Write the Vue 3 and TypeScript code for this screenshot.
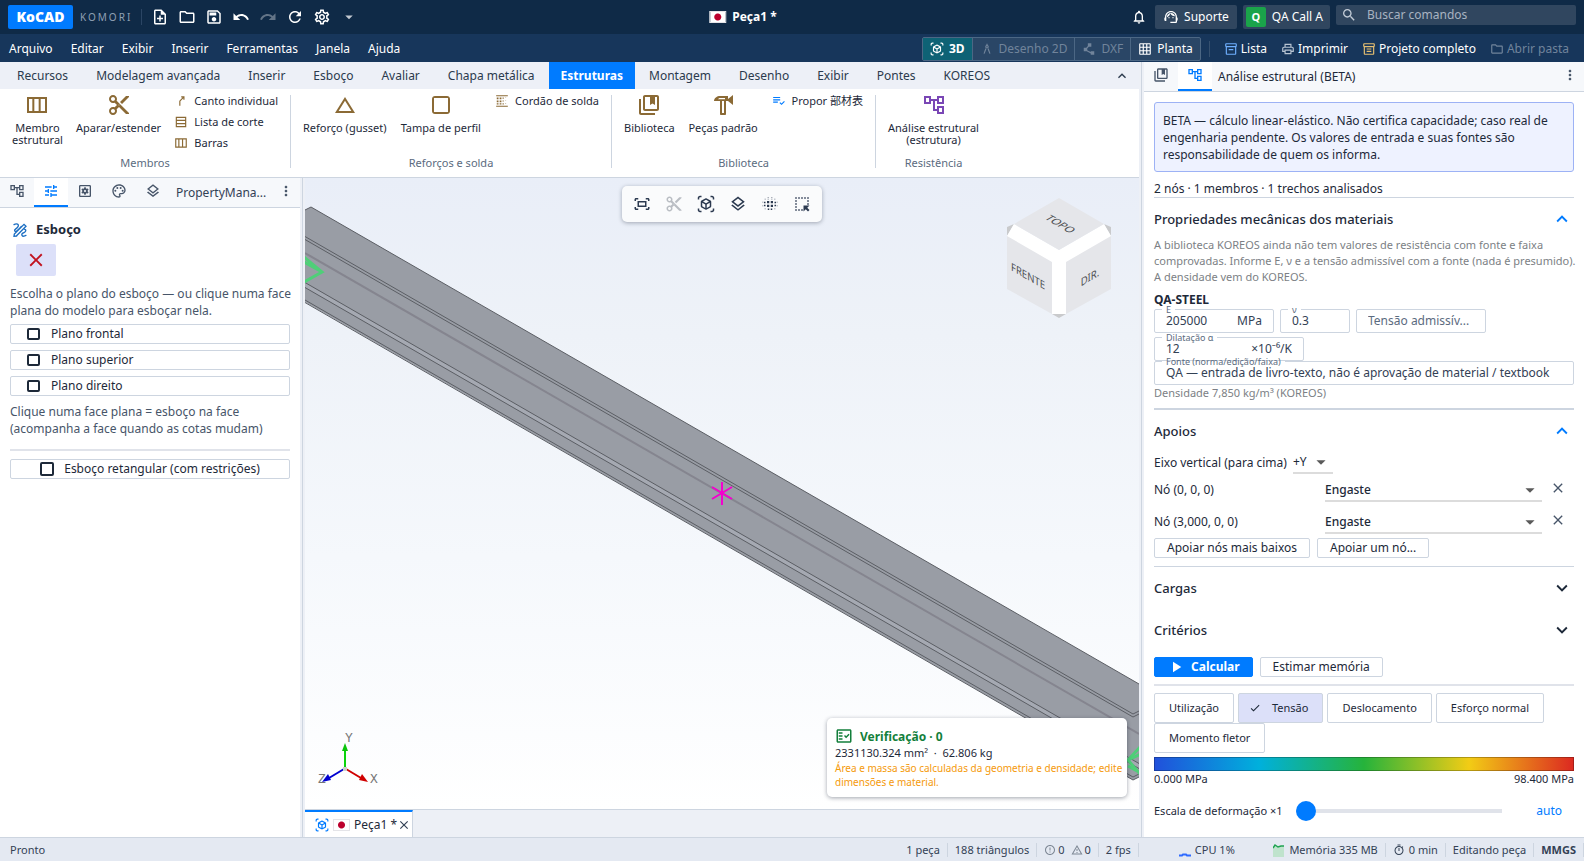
<script setup lang="ts">
import { ref, h } from 'vue'
import type { FunctionalComponent } from 'vue'

const glyphs: Record<string, string> = {
  newFile: 'M14 2H6c-1.1 0-2 .9-2 2v16c0 1.1.89 2 1.99 2H18c1.1 0 2-.9 2-2V8l-6-6zm4 18H6V4h7v5h5v11zM11 18h2v-3h3v-2h-3v-3h-2v3H8v2h3z',
  folder: 'M9.17 6l2 2H20v10H4V6h5.17M10 4H4c-1.1 0-1.99.9-1.99 2L2 18c0 1.1.9 2 2 2h16c1.1 0 2-.9 2-2V8c0-1.1-.9-2-2-2h-8l-2-2z',
  save: 'M17 3H5c-1.11 0-2 .9-2 2v14c0 1.1.89 2 2 2h14c1.1 0 2-.9 2-2V7l-4-4zm2 16H5V5h11.17L19 7.83V19zm-7-7c-1.66 0-3 1.34-3 3s1.34 3 3 3 3-1.34 3-3-1.34-3-3-3zM6 6h9v4H6z',
  undo: 'M12.5 8c-2.65 0-5.05.99-6.9 2.6L2 7v9h9l-3.62-3.62c1.39-1.16 3.16-1.88 5.12-1.88 3.54 0 6.55 2.31 7.6 5.5l2.37-.78C21.08 11.03 17.15 8 12.5 8z',
  redo: 'M18.4 10.6C16.55 8.99 14.15 8 11.5 8c-4.65 0-8.58 3.03-9.96 7.22L3.9 16c1.05-3.19 4.05-5.5 7.6-5.5 1.95 0 3.73.72 5.12 1.88L13 16h9V7l-3.6 3.6z',
  refresh: 'M17.65 6.35C16.2 4.9 14.21 4 12 4c-4.42 0-7.99 3.58-7.99 8s3.57 8 7.99 8c3.73 0 6.84-2.55 7.73-6h-2.08c-.82 2.33-3.04 4-5.65 4-3.31 0-6-2.69-6-6s2.69-6 6-6c1.66 0 3.14.69 4.22 1.78L13 11h7V4l-2.35 2.35z',
  gear: 'M19.43 12.98c.04-.32.07-.64.07-.98 0-.34-.03-.66-.07-.98l2.11-1.65c.19-.15.24-.42.12-.64l-2-3.46c-.09-.16-.26-.25-.44-.25-.06 0-.12.01-.17.03l-2.49 1c-.52-.4-1.08-.73-1.69-.98l-.38-2.65C14.46 2.18 14.25 2 14 2h-4c-.25 0-.46.18-.49.42l-.38 2.65c-.61.25-1.17.59-1.69.98l-2.49-1c-.06-.02-.12-.03-.18-.03-.17 0-.34.09-.43.25l-2 3.46c-.13.22-.07.49.12.64l2.11 1.65c-.04.32-.07.65-.07.98 0 .33.03.66.07.98l-2.11 1.65c-.19.15-.24.42-.12.64l2 3.46c.09.16.26.25.44.25.06 0 .12-.01.17-.03l2.49-1c.52.4 1.08.73 1.69.98l.38 2.65c.03.24.24.42.49.42h4c.25 0 .46-.18.49-.42l.38-2.65c.61-.25 1.17-.59 1.69-.98l2.49 1c.06.02.12.03.18.03.17 0 .34-.09.43-.25l2-3.46c.12-.22.07-.49-.12-.64l-2.11-1.65zm-1.98-1.71c.04.31.05.52.05.73 0 .21-.02.43-.05.73l-.14 1.13.89.7 1.08.84-.7 1.21-1.27-.51-1.04-.42-.9.68c-.43.32-.84.56-1.25.73l-1.06.43-.16 1.13-.2 1.35h-1.4l-.19-1.35-.16-1.13-1.06-.43c-.43-.18-.83-.41-1.23-.71l-.91-.7-1.06.43-1.27.51-.7-1.21 1.08-.84.89-.7-.14-1.13c-.03-.31-.05-.54-.05-.74s.02-.43.05-.73l.14-1.13-.89-.7-1.08-.84.7-1.21 1.27.51 1.04.42.9-.68c.43-.32.84-.56 1.25-.73l1.06-.43.16-1.13.2-1.35h1.39l.19 1.35.16 1.13 1.06.43c.43.18.83.41 1.23.71l.91.7 1.06-.43 1.27-.51.7 1.21-1.07.85-.89.7.14 1.13zM12 8c-2.21 0-4 1.79-4 4s1.79 4 4 4 4-1.79 4-4-1.79-4-4-4zm0 6c-1.1 0-2-.9-2-2s.9-2 2-2 2 .9 2 2-.9 2-2 2z',
  caret: 'M7 10l5 5 5-5z',
  bell: 'M12 22c1.1 0 2-.9 2-2h-4c0 1.1.89 2 2 2zm6-6v-5c0-3.07-1.64-5.64-4.5-6.32V4c0-.83-.67-1.5-1.5-1.5s-1.5.67-1.5 1.5v.68C7.63 5.36 6 7.92 6 11v5l-2 2v1h16v-1l-2-2zm-2 1H8v-6c0-2.48 1.51-4.5 4-4.5s4 2.02 4 4.5v6z',
  agent: 'M21 12.22C21 6.73 16.74 3 12 3c-4.69 0-9 3.65-9 9.28-.6.34-1 .98-1 1.72v2c0 1.1.9 2 2 2h1v-6.1c0-3.87 3.13-7 7-7s7 3.13 7 7V19h-8v2h8c1.1 0 2-.9 2-2v-1.22c.59-.31 1-.92 1-1.64v-2.3c0-.7-.41-1.31-1-1.62zM8 13a1 1 0 1 0 2 0a1 1 0 1 0-2 0zM14 13a1 1 0 1 0 2 0a1 1 0 1 0-2 0zM18 11.03C17.52 8.18 15.04 6 12.05 6c-3.03 0-6.29 2.51-6.03 6.45 2.47-1.01 4.33-3.21 4.86-5.89 1.31 2.63 4 4.44 7.12 4.47z',
  search: 'M15.5 14h-.79l-.28-.27C15.41 12.59 16 11.11 16 9.5 16 5.91 13.09 3 9.5 3S3 5.91 3 9.5 5.91 16 9.5 16c1.61 0 3.09-.59 4.23-1.57l.27.28v.79l5 4.99L20.49 19l-4.99-5zm-6 0C7.01 14 5 11.99 5 9.5S7.01 5 9.5 5 14 7.01 14 9.5 11.99 14 9.5 14z',
  cube: 'M3 4c0-.55.45-1 1-1h2V1H4C2.34 1 1 2.34 1 4v2h2V4zM3 20v-2H1v2c0 1.66 1.34 3 3 3h2v-2H4c-.55 0-1-.45-1-1zM20 1h-2v2h2c.55 0 1 .45 1 1v2h2V4c0-1.66-1.34-3-3-3zM21 20c0 .55-.45 1-1 1h-2v2h2c1.66 0 3-1.34 3-3v-2h-2v2zM19 14.87V9.13c0-.72-.38-1.38-1-1.73l-5-2.88c-.31-.18-.65-.27-1-.27s-.69.09-1 .27L6 7.39c-.62.36-1 1.02-1 1.74v5.74c0 .72.38 1.38 1 1.73l5 2.88c.31.18.65.27 1 .27s.69-.09 1-.27l5-2.88c.62-.35 1-1.01 1-1.73zm-8 2.3l-4-2.3v-4.63l4 2.33v4.6zm1-6.33L8.04 8.53 12 6.25l3.96 2.28L12 10.84zm5 4.03l-4 2.3v-4.6l4-2.33v4.63z',
  compass: 'M6.36 18.78L6.61 21l1.62-1.54 2.77-7.6c-.68-.17-1.28-.51-1.77-.98L6.36 18.78zM14.77 10.88c-.49.47-1.1.81-1.77.98l2.77 7.6L17.39 21l.26-2.22-2.88-7.9zM15 8c0-1.3-.84-2.4-2-2.82V3h-2v2.18C9.84 5.6 9 6.7 9 8c0 1.66 1.34 3 3 3s3-1.34 3-3zm-3 1c-.55 0-1-.45-1-1s.45-1 1-1 1 .45 1 1-.45 1-1 1z',
  polyline: 'M15 16v1.26l-6-3v-3.17L11.7 8H16V2h-6v4.9L7.3 10H3v6h5l7 3.5V22h6v-6z',
  grid: 'M20 2H4c-1.1 0-2 .9-2 2v16c0 1.1.9 2 2 2h16c1.1 0 2-.9 2-2V4c0-1.1-.9-2-2-2zM8 20H4v-4h4v4zm0-6H4v-4h4v4zm0-6H4V4h4v4zm6 12h-4v-4h4v4zm0-6h-4v-4h4v4zm0-6h-4V4h4v4zm6 12h-4v-4h4v4zm0-6h-4v-4h4v4zm0-6h-4V4h4v4z',
  box: 'M20 2H4c-1 0-2 .9-2 2v3.01c0 .72.43 1.34 1 1.69V20c0 1.1 1.1 2 2 2h14c.9 0 2-.9 2-2V8.7c.57-.35 1-.97 1-1.69V4c0-1.1-1-2-2-2zm-1 18H5V9h14v11zm1-13H4V4h16v3zM8 12h8v2H8z',
  boxFull: 'M20 2H4c-1 0-2 .9-2 2v3.01c0 .72.43 1.34 1 1.69V20c0 1.1 1.1 2 2 2h14c.9 0 2-.9 2-2V8.7c.57-.35 1-.97 1-1.69V4c0-1.1-1-2-2-2zm-1 18H5V9h14v11zm1-13H4V4h16v3zM8 11h8v2H8zM8 15h8v2H8z',
  print: 'M19 8h-1V3H6v5H5c-1.66 0-3 1.34-3 3v6h4v4h12v-4h4v-6c0-1.66-1.34-3-3-3zM8 5h8v3H8V5zm8 14H8v-4h8v4zm2-4v-2H6v2H4v-4c0-.55.45-1 1-1h14c.55 0 1 .45 1 1v4h-2z',
  tree: 'M22 11V3h-7v3H9V3H2v8h7V8h2v10h4v3h7v-8h-7v3h-2V8h2v3h7zM7 9H4V5h3v4zm10 6h3v4h-3v-4zm0-10h3v4h-3V5z',
  bookmarks: 'M4 6H2v14c0 1.1.9 2 2 2h14v-2H4V6zm16-4H8c-1.1 0-2 .9-2 2v12c0 1.1.9 2 2 2h12c1.1 0 2-.9 2-2V4c0-1.1-.9-2-2-2zm0 14H8V4h5v8l2.5-1.5L18 12V4h2v12z',
  cut: 'M9.64 7.64c.23-.5.36-1.05.36-1.64 0-2.21-1.79-4-4-4S2 3.79 2 6s1.79 4 4 4c.59 0 1.14-.13 1.64-.36L10 12l-2.36 2.36C7.14 14.13 6.59 14 6 14c-2.21 0-4 1.79-4 4s1.79 4 4 4 4-1.79 4-4c0-.59-.13-1.14-.36-1.64L12 14l7 7h3v-1L9.64 7.64zM6 8c-1.1 0-2-.89-2-2s.9-2 2-2 2 .89 2 2-.9 2-2 2zm0 12c-1.1 0-2-.89-2-2s.9-2 2-2 2 .89 2 2-.9 2-2 2zm6-7.5c-.28 0-.5-.22-.5-.5s.22-.5.5-.5.5.22.5.5-.22.5-.5.5zM19 3l-6 6 2 2 7-7V3z',
  columns: 'M2 4v16h20V4H2zm5.33 14H4V6h3.33v12zm6.34 0h-4.34V6h4.34v12zM20 18h-4.33V6H20v12z',
  rows: 'M3 3v18h18V3H3zm16 2v3.33H5V5h14zm0 8.67H5v-3.34h14v3.34zM5 19v-3.33h14V19H5z',
  corner: 'M12.34 6V4H18v5.66h-2V7.41l-5 5V20H9v-7.58c0-.53.21-1.04.59-1.41l5-5h-2.25z',
  triangle: 'M12 7.77L18.39 18H5.61L12 7.77M12 4L2 20h20L12 4z',
  square: 'M18 3H6C4.300 3 3 4.300 3 6v12c0 1.700 1.300 3 3 3h12c1.700 0 3-1.300 3-3V6c0-1.700-1.300-3-3-3zm1 16H5V5h14v14z',
  weld: 'M2 2h20v2H2zM2 20h20v2H2zM3 6h3v3H3zM8 6h3v3H8zM13 6h2v2h-2zM18 6h1v1h-1zM3 11h3v3H3zM8 11h3v3H8zM13 11h2v2h-2zM18 11h1v1h-1zM3 16h3v2H3zM8 16h3v2H8zM13 16h2v2h-2zM18 16h1v1h-1z',
  hammer: 'M22 2l-5 4V3H9C6.240 3 3 5 3 8h6v13c0 .55.45 1 1 1h4c.55 0 1-.45 1-1V8h2l5 4zM11 8h2v12h-2zM7 6.300C7.600 5.500 8.300 5 9.300 5H14v1.300z',
  checklist: 'M2 5h12v2H2zM2 9h12v2H2zM2 13h8v2H2zM20.590 11.930l-4.250 4.240-2.120-2.120-1.410 1.410L16.340 19 22 13.340z',
  tune: 'M3 17v2h6v-2H3zM3 5v2h10V5H3zm10 16v-2h8v-2h-8v-2h-2v6h2zM7 9v2H3v2h4v2h2V9H7zm14 4v-2H11v2h10zm-6-4h2V7h4V5h-4V3h-2v6z',
  gearBox: 'M19 3H5c-1.110 0-2 .9-2 2v14c0 1.100.89 2 2 2h14c1.100 0 2-.9 2-2V5c0-1.100-.9-2-2-2zm0 16H5V5h14v14zM10.900 6.500h2.200l.4 1.700 1.100.6 1.700-.5 1.100 1.900-1.300 1.200v1.200l1.300 1.200-1.100 1.900-1.700-.5-1.100.6-.4 1.700h-2.200l-.4-1.700-1.100-.6-1.700.5-1.100-1.900 1.300-1.200v-1.200L6.600 10.200l1.100-1.900 1.700.5 1.100-.6zM12 10.400a1.600 1.600 0 1 0 0 3.200a1.600 1.600 0 1 0 0-3.200z',
  palette: 'M12 22C6.490 22 2 17.510 2 12S6.490 2 12 2s10 4.040 10 9c0 3.310-2.690 6-6 6h-1.770c-.28 0-.5.22-.5.5 0 .12.05.23.13.33.41.47.64 1.060.64 1.670 0 1.380-1.120 2.500-2.500 2.500zm0-18c-4.410 0-8 3.590-8 8s3.590 8 8 8c.28 0 .5-.22.5-.5 0-.16-.08-.28-.14-.35-.41-.46-.63-1.050-.63-1.650 0-1.380 1.120-2.500 2.500-2.500H16c2.210 0 4-1.790 4-4 0-3.860-3.590-7-8-7zM5 11.500a1.500 1.500 0 1 0 3 0a1.500 1.500 0 1 0-3 0zM8 7.500a1.500 1.500 0 1 0 3 0a1.500 1.500 0 1 0-3 0zM13 7.500a1.500 1.500 0 1 0 3 0a1.500 1.500 0 1 0-3 0zM16 11.500a1.500 1.500 0 1 0 3 0a1.500 1.500 0 1 0-3 0z',
  layers: 'M11.990 18.540l-7.370-5.730L3 14.070l9 7 9-7-1.630-1.270-7.380 5.740zM12 16l7.360-5.730L21 9l-9-7-9 7 1.630 1.270L12 16zm0-11.470L17.740 9 12 13.470 6.260 9 12 4.530z',
  more: 'M12 8c1.100 0 2-.9 2-2s-.9-2-2-2-2 .9-2 2 .9 2 2 2zm0 2c-1.100 0-2 .9-2 2s.9 2 2 2 2-.9 2-2-.9-2-2-2zm0 6c-1.100 0-2 .9-2 2s.9 2 2 2 2-.9 2-2-.9-2-2-2z',
  fit: 'M17 4h3c1.100 0 2 .9 2 2v2h-2V6h-3V4zM4 8V6h3V4H4c-1.100 0-2 .9-2 2v2h2zm16 8v2h-3v2h3c1.100 0 2-.9 2-2v-2h-2zM7 18H4v-2H2v2c0 1.100.9 2 2 2h3v-2zM18 8H6v8h12V8zm-2 6H8v-4h8v4z',
  dots: 'M5 5h1v1H5zM9 5h1v1H9zM14 5h1v1h-1zM18 5h1v1h-1zM8 8h3v3H8zM13 8h3v3h-3zM8 13h3v3H8zM13 13h3v3h-3zM4 9h2v2H4zM18 9h2v2h-2zM4 13h2v2H4zM18 13h2v2h-2zM9 18h2v2H9zM13 18h2v2h-2zM5 18h1v1H5zM18 18h1v1h-1zM9 3h1v1H9zM14 3h1v1h-1zM2 9h1v1H2zM2 14h1v1H2zM21 9h1v1h-1zM21 14h1v1h-1z',
  select: 'M3 3h2v2H3zM7 3h2v2H7zM11 3h2v2h-2zM15 3h2v2h-2zM19 3h2v2h-2zM3 7h2v2H3zM3 11h2v2H3zM3 15h2v2H3zM3 19h2v2H3zM7 19h2v2H7zM11 19h2v2h-2zM19 7h2v2h-2zM19 11h2v2h-2zM14 14h8l-3 3 3 3-2 2-3-3-3 3z',
  close: 'M19 6.410L17.590 5 12 10.590 6.410 5 5 6.410 10.590 12 5 17.590 6.410 19 12 13.410 17.590 19 19 17.590 13.410 12z',
  up: 'M12 8l-6 6 1.410 1.410L12 10.830l4.590 4.580L18 14z',
  down: 'M16.590 8.590L12 13.170 7.410 8.590 6 10l6 6 6-6z',
  play: 'M8 5v14l11-7z',
  check: 'M9 16.170L4.830 12l-1.420 1.410L9 19 21 7l-1.410-1.410z',
  factCheck: 'M20 3H4c-1.100 0-2 .9-2 2v14c0 1.100.9 2 2 2h16c1.100 0 2-.9 2-2V5c0-1.100-.9-2-2-2zm0 16H4V5h16v14zM19.410 10.420L17.990 9l-3.170 3.170-1.410-1.420L12 12.160 14.820 15zM5 7h5v2H5zM5 11h5v2H5zM5 15h5v2H5z',
  error: 'M11 15h2v2h-2zm0-8h2v6h-2zm.990-5C6.470 2 2 6.480 2 12s4.470 10 9.990 10C17.520 22 22 17.520 22 12S17.520 2 11.990 2zM12 20c-4.420 0-8-3.580-8-8s3.580-8 8-8 8 3.580 8 8-3.580 8-8 8z',
  warning: 'M12 5.990L19.530 19H4.470L12 5.990M12 2L1 21h22L12 2zm1 14h-2v2h2v-2zm0-6h-2v4h2v-4z',
  timer: 'M15 1H9v2h6V1zm-4 13h2V8h-2v6zm8.030-6.610l1.420-1.420c-.43-.51-.9-.99-1.410-1.410l-1.420 1.420C16.070 4.740 14.120 4 12 4c-4.970 0-9 4.030-9 9s4.020 9 9 9 9-4.030 9-9c0-2.120-.74-4.070-1.970-5.610zM12 20c-3.870 0-7-3.130-7-7s3.130-7 7-7 7 3.130 7 7-3.130 7-7 7z',
}

const Icon: FunctionalComponent<{ name: string }> = (props) =>
  h('svg', { viewBox: '0 0 24 24', 'aria-hidden': 'true', fill: 'currentColor', 'fill-rule': 'evenodd' }, [
    h('path', { d: glyphs[props.name] }),
  ])
Icon.props = ['name']

const quick = [
  { icon: 'newFile', title: 'Novo' },
  { icon: 'folder', title: 'Abrir' },
  { icon: 'save', title: 'Salvar' },
  { icon: 'undo', title: 'Desfazer' },
  { icon: 'redo', title: 'Refazer', off: true },
  { icon: 'refresh', title: 'Reconstruir' },
  { icon: 'gear', title: 'Opções' },
  { icon: 'caret', title: 'Mais', dim: true },
]
const menus = ['Arquivo', 'Editar', 'Exibir', 'Inserir', 'Ferramentas', 'Janela', 'Ajuda']
const views = [
  { icon: 'cube', label: '3D', state: 'on' },
  { icon: 'compass', label: 'Desenho 2D', state: 'off' },
  { icon: 'polyline', label: 'DXF', state: 'off' },
  { icon: 'grid', label: 'Planta', state: '' },
]
const actions = [
  { icon: 'box', label: 'Lista', tone: 'blue' },
  { icon: 'print', label: 'Imprimir', tone: 'plain' },
  { icon: 'boxFull', label: 'Projeto completo', tone: 'sand' },
  { icon: 'folder', label: 'Abrir pasta', tone: 'off' },
]
const tabs = ['Recursos', 'Modelagem avançada', 'Inserir', 'Esboço', 'Avaliar', 'Chapa metálica', 'Estruturas', 'Montagem', 'Desenho', 'Exibir', 'Pontes', 'KOREOS']
const activeTab = ref('Estruturas')
const groups = [
  {
    label: 'Membros', id: 'g1',
    big: [{ icon: 'columns', label: 'Membro\nestrutural' }, { icon: 'cut', label: 'Aparar/estender' }],
    small: [{ icon: 'corner', label: 'Canto individual' }, { icon: 'rows', label: 'Lista de corte' }, { icon: 'columns', label: 'Barras' }],
  },
  {
    label: 'Reforços e solda', id: 'g2',
    big: [{ icon: 'triangle', label: 'Reforço (gusset)' }, { icon: 'square', label: 'Tampa de perfil' }],
    small: [{ icon: 'weld', label: 'Cordão de solda' }],
  },
  {
    label: 'Biblioteca', id: 'g3',
    big: [{ icon: 'bookmarks', label: 'Biblioteca' }, { icon: 'hammer', label: 'Peças padrão' }],
    small: [{ icon: 'checklist', label: 'Propor 部材表', blue: true }],
  },
  {
    label: 'Resistência', id: 'g4',
    big: [{ icon: 'tree', label: 'Análise estrutural\n(estrutura)', violet: true }],
    small: [],
  },
]
const sideTabs = ['tree', 'tune', 'gearBox', 'palette', 'layers']
const sideTitles = ['Árvore', 'Propriedades', 'Configurações', 'Aparência', 'Camadas']
const planes = ['Plano frontal', 'Plano superior', 'Plano direito']
const viewTools = ['fit', 'cut', 'cube', 'layers', 'dots', 'select']
const viewTitles = ['Enquadrar', 'Cortar', 'Vista 3D', 'Camadas', 'Malha', 'Seleção']
const nodes = ref([
  { label: 'Nó (0, 0, 0)', kind: 'Engaste' },
  { label: 'Nó (3,000, 0, 0)', kind: 'Engaste' },
])
const results = ['Utilização', 'Tensão', 'Deslocamento', 'Esforço normal', 'Momento fletor']
const result = ref('Tensão')
const young = ref('205000')
const poisson = ref('0.3')
const expansion = ref('12')
const allowable = ref('')
const source = ref('QA — entrada de livro-texto, não é aprovação de material / textbook')
const scale = ref(0)
const axis = ref('+Y')
</script>

<template>
  <div class="app">
    <header class="titlebar">
      <span class="brand">KoCAD</span>
      <span class="vendor">KOMORI</span>
      <div class="quick">
        <button v-for="q in quick" :key="q.icon" type="button" :title="q.title" :class="{ off: q.off, dim: q.dim }"><Icon :name="q.icon" /></button>
      </div>
      <div class="doc-title"><span class="flag"></span><b>Peça1 *</b></div>
      <div class="account">
        <button type="button" class="bell" title="Notificações"><Icon name="bell" /></button>
        <button type="button" class="chip"><Icon name="agent" />Suporte</button>
        <button type="button" class="chip user"><span class="avatar">Q</span>QA Call A</button>
        <label class="search"><Icon name="search" /><input type="search" placeholder="Buscar comandos" aria-label="Buscar comandos" /></label>
      </div>
    </header>

    <nav class="menubar">
      <button v-for="m in menus" :key="m" type="button" class="menu">{{ m }}</button>
      <div class="menu-right">
        <div class="views">
          <button v-for="v in views" :key="v.label" type="button" :class="v.state"><Icon :name="v.icon" />{{ v.label }}</button>
        </div>
        <span class="bar"></span>
        <button v-for="a in actions" :key="a.label" type="button" class="action" :class="a.tone"><Icon :name="a.icon" />{{ a.label }}</button>
      </div>
    </nav>

    <div class="body">
      <div class="main">
        <div class="tabs" role="tablist">
          <button v-for="t in tabs" :key="t" type="button" role="tab" :class="{ on: t === activeTab }" @click="activeTab = t">{{ t }}</button>
          <button type="button" class="fold" title="Recolher"><Icon name="up" /></button>
        </div>
        <div class="ribbon">
          <section v-for="g in groups" :key="g.id" class="group" :class="g.id">
            <div class="tools">
              <button v-for="b in g.big" :key="b.label" type="button" class="big" :class="{ violet: 'violet' in b }"><Icon :name="b.icon" /><span>{{ b.label }}</span></button>
              <div v-if="g.small.length" class="smalls">
                <button v-for="s in g.small" :key="s.label" type="button" class="small" :class="{ blue: 'blue' in s }"><Icon :name="s.icon" />{{ s.label }}</button>
              </div>
            </div>
            <p>{{ g.label }}</p>
          </section>
        </div>

        <div class="work">
          <aside class="side">
            <div class="side-tabs">
              <button v-for="(s, i) in sideTabs" :key="s" type="button" :title="sideTitles[i]" :class="{ on: s === 'tune' }"><Icon :name="s" /></button>
              <span class="side-name">PropertyMana...</span>
              <button type="button" class="kebab" title="Mais"><Icon name="more" /></button>
            </div>
            <div class="side-body">
              <h2>
                <svg viewBox="0 0 24 24" fill="none" stroke="currentColor" stroke-width="2" stroke-linecap="round" aria-hidden="true">
                  <path d="M3 4c4-2.500 8-.5 6 3s-6.500 4-5 6.500S11 10 14 6.500 M7 21l-4 .5L3.500 18 18 3.500l3 3L6.500 21 M19 11c3 .5 1.500 4-1 5s-4 2-3 4 4 1.500 6 0" />
                </svg>
                Esboço
              </h2>
              <button type="button" class="cancel" title="Cancelar"><Icon name="close" /></button>
              <p class="hint">Escolha o plano do esboço — ou clique numa face plana do modelo para esboçar nela.</p>
              <div class="planes">
                <button v-for="p in planes" :key="p" type="button" class="plane"><span class="box"></span>{{ p }}</button>
              </div>
              <p class="hint">Clique numa face plana = esboço na face (acompanha a face quando as cotas mudam)</p>
              <hr />
              <button type="button" class="plane rect"><span class="box"></span>Esboço retangular (com restrições)</button>
            </div>
          </aside>
          <div class="splitter"></div>
          <div class="center">
            <div class="viewport">
              <svg class="scene" viewBox="305 178 834 631" preserveAspectRatio="xMidYMid slice" role="img" aria-label="Modelo 3D">
                <path fill="#999da5" d="M305 210l6-3 828 477v93l-6 3L305 302z" />
                <path fill="#a5a9b2" d="M305 282.500L1139 763.500v5L305 287.500z" />
                <g fill="none" stroke="#5b5e64" stroke-width="1">
                  <path d="M305 210l6-3 828 477" />
                  <path d="M305 236.500L1133 714l6-3M305 239.500L1133 717l6-3" />
                  <path d="M305 282.500L1139 763.500M305 287.500L1139 768.500" />
                  <path d="M305 300L1133 777l6-3M305 302.500L1133 780l6-3" />
                </g>
                <path fill="none" stroke="#85858f" stroke-width="2" d="M305 253L1139 734" />
                <path fill="none" stroke="#4fcf78" stroke-width="3" d="M304 257l18 15-18 10M304 262l18 10M1141 746l-13 14M1141 754l-13 6 13 15M1128 766l13 7" />
                <path fill="none" stroke="#f400cf" stroke-width="2" d="M722 482v23M712 499l20-12M712 487l20 12" />
                <g class="navcube">
                  <path fill="#c9cacc" d="M1007 236v-9l7-3zM1111 236v-9l-7-3zM1052 314l7 4 7-4z" />
                  <path fill="#fff" d="M1014 224l45 26 45-26 7 12v12l-45 66h-14l-45-66v-12z" />
                  <path fill="#e5e6ea" d="M1059 198l45 26-45 26-45-26zM1007 236l45 26v52l-45-25zM1111 236l-45 26v52l45-25z" />
                  <g fill="#4d4f53" font-size="11" text-anchor="middle">
                    <text transform="matrix(.87 .5 -.87 .5 1057 226)">TOPO</text>
                    <text transform="matrix(.87 .5 0 1 1028 280)">FRENTE</text>
                    <text transform="matrix(.87 -.5 0 1 1090 281)">DIR.</text>
                  </g>
                </g>
                <g class="triad">
                  <path stroke="#0bd30b" stroke-width="2" d="M345 768v-20" />
                  <path fill="#0bc40b" d="M342 751l3-8 3 8z" />
                  <path stroke="#d00000" stroke-width="2" d="M346 769l15 9" />
                  <path fill="#d00000" d="M362 774l6 8-9-2z" />
                  <path stroke="#0000d0" stroke-width="2" d="M344 769l-15 9" />
                  <path fill="#0000d0" d="M328 774l-6 8 9-2z" />
                  <path fill="#ccc" d="M343 767h4v4h-4z" />
                  <g fill="#777" font-size="13" text-anchor="middle">
                    <text x="349" y="742">Y</text><text x="374" y="783">X</text><text x="322" y="783">Z</text>
                  </g>
                </g>
              </svg>
              <div class="floatbar">
                <button v-for="(v, i) in viewTools" :key="v" type="button" :title="viewTitles[i]" :class="{ off: v === 'cut' }"><Icon :name="v" /></button>
              </div>
              <div class="verify">
                <h3><Icon name="factCheck" />Verificação · 0</h3>
                <p>2331130.324 mm² &nbsp;·&nbsp; 62.806 kg</p>
                <p class="warn">Área e massa são calculadas da geometria e densidade; edite dimensões e material.</p>
              </div>
            </div>
            <div class="doctabs">
              <div class="doctab">
                <Icon name="cube" /><span class="flag"></span><span>Peça1 *</span>
                <button type="button" title="Fechar"><Icon name="close" /></button>
              </div>
            </div>
          </div>
        </div>
      </div>

      <div class="splitter"></div>

      <aside class="panel">
        <div class="panel-tabs">
          <button type="button" title="Biblioteca"><Icon name="bookmarks" /></button>
          <button type="button" title="Análise" class="on"><Icon name="tree" /></button>
          <span>Análise estrutural (BETA)</span>
          <button type="button" class="kebab" title="Mais"><Icon name="more" /></button>
        </div>
        <div class="panel-body">
          <p class="notice">BETA — cálculo linear-elástico. Não certifica capacidade; caso real de engenharia pendente. Os valores de entrada e suas fontes são responsabilidade de quem os informa.</p>
          <p class="summary">2 nós · 1 membros · 1 trechos analisados</p>

          <button type="button" class="head open" aria-expanded="true">Propriedades mecânicas dos materiais<Icon name="up" /></button>
          <p class="note">A biblioteca KOREOS ainda não tem valores de resistência com fonte e faixa comprovadas. Informe E, ν e a tensão admissível com a fonte (nada é presumido). A densidade vem do KOREOS.</p>
          <h4>QA-STEEL</h4>
          <div class="fields">
            <div class="field f-e"><label for="young">E</label><input id="young" v-model="young" /><span>MPa</span></div>
            <div class="field f-v"><label for="poisson">ν</label><input id="poisson" v-model="poisson" /></div>
            <div class="field f-t"><input v-model="allowable" placeholder="Tensão admissív..." aria-label="Tensão admissível" /></div>
          </div>
          <div class="fields second">
            <div class="field f-a"><label for="expansion">Dilatação α</label><input id="expansion" v-model="expansion" /><span>×10⁻⁶/K</span></div>
          </div>
          <div class="field f-s"><label for="source">Fonte (norma/edição/faixa)</label><input id="source" v-model="source" /></div>
          <p class="density">Densidade 7,850 kg/m³ (KOREOS)</p>
          <hr class="thick" />

          <button type="button" class="head open" aria-expanded="true">Apoios<Icon name="up" /></button>
          <div class="axis">
            <label for="axis">Eixo vertical (para cima)</label>
            <span class="pick"><select id="axis" v-model="axis"><option>+Y</option><option>+Z</option></select><Icon name="caret" /></span>
          </div>
          <div v-for="(n, i) in nodes" :key="n.label" class="node">
            <label :for="'node' + i">{{ n.label }}</label>
            <span class="pick"><select :id="'node' + i" v-model="n.kind"><option>Engaste</option><option>Rótula</option></select><Icon name="caret" /></span>
            <button type="button" title="Remover"><Icon name="close" /></button>
          </div>
          <div class="row">
            <button type="button" class="btn">Apoiar nós mais baixos</button>
            <button type="button" class="btn">Apoiar um nó...</button>
          </div>
          <hr class="thin" />

          <button type="button" class="head" aria-expanded="false">Cargas<Icon name="down" /></button>
          <button type="button" class="head" aria-expanded="false">Critérios<Icon name="down" /></button>
          <div class="row calc">
            <button type="button" class="btn primary"><Icon name="play" />Calcular</button>
            <button type="button" class="btn">Estimar memória</button>
          </div>
          <hr class="soft" />

          <div class="results">
            <button v-for="r in results" :key="r" type="button" :class="{ on: r === result }" @click="result = r"><Icon v-if="r === result" name="check" />{{ r }}</button>
          </div>
          <div class="legend"></div>
          <div class="range"><span>0.000 MPa</span><span>98.400 MPa</span></div>
          <div class="deform">
            <label for="scale">Escala de deformação ×1</label>
            <input id="scale" v-model="scale" type="range" min="0" max="100" />
            <button type="button">auto</button>
          </div>
        </div>
      </aside>
    </div>

    <footer class="status">
      <span class="ready">Pronto</span>
      <span class="cell">1 peça</span>
      <span class="cell">188 triângulos</span>
      <span class="cell dimmed"><Icon name="error" /><i>0</i><Icon name="warning" /><i>0</i></span>
      <span class="cell">2 fps</span>
      <span class="cell cpu">
        <svg viewBox="0 0 12 14" aria-hidden="true"><path fill="none" stroke="#2f6bff" stroke-width="2" d="M0 12.500h3l1-1h3l1 1h4" /></svg>CPU 1%
      </span>
      <span class="cell mem">
        <svg viewBox="0 0 12 14" aria-hidden="true"><path fill="#bfe3cd" d="M0 3h11v11H0z" /><path fill="none" stroke="#1fa351" stroke-width="1.500" d="M0 5l2-3 3 2 3-1h3" /></svg>Memória 335 MB
      </span>
      <span class="cell time"><Icon name="timer" />0 min</span>
      <span class="cell">Editando peça</span>
      <span class="cell"><b>MMGS</b></span>
    </footer>
  </div>
</template>

<style>
html, body { margin: 0; height: 100%; }
#app { height: 100%; }
</style>

<style scoped>
* { box-sizing: border-box; }
.app {
  height: 100vh; display: flex; flex-direction: column; overflow: hidden; background: #edf0f6;
  color: #1d2939; font-family: "Noto Sans", "Noto Sans CJK JP", sans-serif; font-size: 12px; line-height: 16px;
}
button, input, select { font: inherit; color: inherit; margin: 0; padding: 0; border: 0; background: none; border-radius: 0; }
button { display: inline-flex; align-items: center; justify-content: center; white-space: nowrap; cursor: pointer; }
p, h2, h3, h4 { margin: 0; }
hr { margin: 0; border: 0; }
svg { flex: none; width: 16px; height: 16px; }

.titlebar { display: flex; align-items: center; height: 34px; flex: none; padding: 0 8px; background: #0f2a47; color: #fff; position: relative; }
.brand { background: #007bff; border-radius: 2px; height: 24px; width: 65px; line-height: 24px; text-align: center; font-weight: 900; font-size: 14px; }
.vendor { margin-left: 7px; width: 62px; font-size: 10px; letter-spacing: 2px; color: #8fa0b4; border-right: 1px solid #2b4564; }
.quick { display: flex; margin-left: 4px; }
.quick button { width: 27px; height: 24px; }
.quick svg { width: 18px; height: 18px; }
.quick .off { opacity: .35; }
.quick .dim { opacity: .75; }
.doc-title { position: absolute; left: 50%; transform: translateX(-50%); display: flex; align-items: center; gap: 6px; margin-left: -49px; font-size: 12px; }
.flag { width: 17px; height: 12px; background: radial-gradient(circle, #bc002d 0 3px, #fff 4px); border: 1px solid #e4e4e8; }
.account { margin-left: auto; display: flex; align-items: center; gap: 5px; }
.bell { width: 20px; }
.chip { height: 24px; padding: 0 8px; gap: 5px; margin-left: 1px; border-radius: 2px; background: #30465f; font-size: 12px; }
.chip.user { padding: 0 7px 0 3px; gap: 6px; }
.avatar { width: 20px; height: 20px; line-height: 20px; border-radius: 2px; background: #1aa34a; font-weight: 700; font-size: 11px; }
.search { display: flex; align-items: center; gap: 10px; width: 240px; height: 20px; padding: 0 5px; margin: 0 0 4px 1px; border-radius: 2px; background: #30465f; color: #c3ccd7; }
.search input { width: 100%; min-width: 0; outline: 0; appearance: none; }
.search input::placeholder { color: #a8b3c1; opacity: 1; }

.menubar { display: flex; align-items: center; height: 28px; flex: none; padding: 1px 8px 0 0; background: #17365b; color: #fff; }
.menu { padding: 0 9px; font-size: 12px; }
.menu-right { margin-left: auto; display: flex; align-items: center; }
.views { display: flex; height: 24px; border: 1px solid #4c6784; border-radius: 2px; background: #2a4666; }
.views button { gap: 5px; padding: 0 7px; border-left: 1px solid #4c6784; }
.views button:first-child { border-left: 0; }
.views .on { background: #0e6275; font-weight: 700; }
.views .off { color: #71849b; }
.views svg { width: 14px; height: 14px; }
.bar { width: 1px; height: 16px; margin: 0 7px 0 8px; background: #35506f; }
.action { gap: 3px; padding: 0 7px; }
.action svg { width: 14px; height: 14px; }
.action.blue svg { color: #6fb0ff; }
.action.sand svg { color: #e7c071; }
.action.plain svg { color: #b9c5d3; }
.action.off { color: #71849b; }

.body { flex: 1; min-height: 0; display: flex; }
.main { flex: 1; min-width: 0; display: flex; flex-direction: column; }
.tabs { display: flex; height: 27px; flex: none; background: #edf0f7; padding-left: 3px; }
.tabs button { padding: 0 14px; font-size: 12px; color: #2b3a4d; }
.tabs .on { background: #007bff; color: #fff; font-weight: 700; padding: 0 12px; }
.tabs .fold { margin-left: auto; padding: 0 9px; }
.ribbon { display: flex; height: 89px; flex: none; background: #fff; border-bottom: 1px solid #cdd5e0; padding: 6px 0 9px; }
.group { display: flex; flex-direction: column; justify-content: space-between; border-right: 1px solid #cdd5e0; font-size: 11px; }
.group:last-child { border-right: 0; }
.group p { text-align: center; color: #5b6b80; line-height: 10px; }
.g1 { width: 291px; } .g2 { width: 321px; } .g3 { width: 264px; } .g4 { width: 115px; }
.tools { display: flex; justify-content: space-between; padding: 0 12px; }
.g4 .tools { justify-content: center; }
.big { flex-direction: column; justify-content: flex-start; line-height: 12px; color: #8b6a35; padding-top: 0; }
.big span { color: #1d2939; white-space: pre-line; text-align: center; margin-top: 5px; }
.big svg { width: 24px; height: 24px; margin-top: -2px; }
.big.violet { color: #7a47b5; }
.smalls { display: flex; flex-direction: column; align-items: flex-start; }
.small { height: 21px; gap: 6px; color: #1d2939; padding-bottom: 9px; }
.small svg { width: 14px; height: 14px; color: #8b6a35; }
.small.blue svg { color: #007bff; }

.work { flex: 1; min-height: 0; display: flex; }
.side { width: 300px; flex: none; background: #fff; }
.side-tabs, .panel-tabs { display: flex; align-items: stretch; height: 30px; background: #f6f8fb; border-bottom: 1px solid #cdd5e0; color: #475569; }
.side-tabs button, .panel-tabs button { width: 34px; padding-bottom: 1px; border-bottom: 2px solid transparent; }
.side-tabs .on, .panel-tabs .on { background: #fff; color: #007bff; border-bottom-color: #007bff; }
.side-tabs .kebab, .panel-tabs .kebab { width: 28px; margin-left: auto; }
.side-name { align-self: center; padding-left: 6px; color: #334155; }
.side-body { padding: 13px 10px; display: flex; flex-direction: column; }
.side-body h2 { display: flex; align-items: center; gap: 8px; padding-left: 2px; font-size: 13px; line-height: 17px; }
.side-body h2 svg { color: #1b6ec2; }
.cancel { width: 40px; height: 32px; margin: 6px 0 9px 6px; border-radius: 2px; background: #dce0f9; color: #c1121f; }
.cancel svg { width: 22px; height: 22px; }
.hint { color: #475569; line-height: 17px; margin: 0 -10px 5px 0; }
.planes { display: flex; flex-direction: column; gap: 6px; margin-bottom: 7px; }
.plane { height: 20px; padding-left: 16px; gap: 11px; justify-content: flex-start; border: 1px solid #cdd5e0; border-radius: 2px; }
.plane .box { width: 13px; height: 12px; border: 2px solid #1d2939; border-radius: 2px; }
.plane.rect { justify-content: center; padding: 0; gap: 10px; }
.plane.rect .box { width: 14px; height: 14px; }
.side-body hr { height: 2px; background: #e0e3ea; margin: 7px 0 8px; }
.splitter { width: 5px; flex: none; background: linear-gradient(90deg, #edf0f6 2px, #cdd5e0 2px 3px, #edf0f6 3px); }

.center { flex: 1; min-width: 0; display: flex; flex-direction: column; }
.viewport { flex: 1; min-height: 0; position: relative; overflow: hidden; background: linear-gradient(#e9eef8, #eef2f8 25%, #f5f8fc 60%, #fff); }
.scene { width: 100%; height: 100%; display: block; }
.scene .triad { font-family: "Liberation Mono", monospace; }
.floatbar { position: absolute; top: 8px; left: 50%; transform: translateX(-50%); display: flex; align-items: center; height: 36px; padding: 0 4px; border-radius: 5px; background: #fafbfc; box-shadow: 0 1px 4px rgba(20, 30, 50, .35); color: #2c3a50; }
.floatbar button { width: 32px; height: 32px; }
.floatbar svg { width: 18px; height: 18px; }
.floatbar .off { color: #b9bdc3; }
.verify { position: absolute; right: 12px; bottom: 12px; width: 300px; padding: 9px 0 8px 8px; border-radius: 5px; background: #fff; box-shadow: 0 1px 4px rgba(20, 30, 50, .4); font-size: 11px; }
.verify h3 { display: flex; align-items: center; gap: 7px; font-size: 12px; line-height: 17px; color: #137f3b; }
.verify h3 svg { width: 18px; height: 18px; }
.verify .warn { font-size: 10px; line-height: 14px; color: #f59a0b; }
.doctabs { height: 28px; flex: none; border-top: 1px solid #cdd5e0; background: #edf0f6; display: flex; }
.doctab { display: flex; align-items: center; gap: 4px; padding: 0 1px 0 10px; background: #fff; border-top: 2px solid #007bff; border-right: 1px solid #cdd5e0; }
.doctab svg { width: 14px; height: 14px; color: #007bff; }
.doctab button svg { color: #334155; }
.doctab button { margin-left: -4px; }

.panel { width: 440px; flex: none; background: #fff; }
.panel-tabs > span { align-self: center; padding-left: 6px; color: #1d2939; font-size: 12px; }
.panel-body { padding: 10px 10px 0; display: flex; flex-direction: column; }
.notice { border: 1px solid #9db2f5; border-radius: 3px; background: #eef2ff; padding: 9px 8px 8px; line-height: 17px; }
.summary { margin-top: 9px; border-bottom: 1px solid #cdd5e0; line-height: 16px; }
.head { height: 42px; justify-content: space-between; padding-right: 1px; font-size: 13px; font-weight: 500; }
.head.open { height: 41px; }
.head svg { width: 22px; height: 22px; }
.head.open svg { color: #007bff; }
.note { font-size: 11px; line-height: 16px; color: #7c7f85; margin: -2px -10px 0 0; }
.panel-body h4 { font-size: 12px; line-height: 14px; margin-top: 8px; padding-bottom: 2px; }
.fields { display: flex; gap: 6px; }
.field { position: relative; display: flex; align-items: center; height: 24px; padding: 0 11px; border: 1px solid #cdd5e0; border-radius: 2px; color: #334155; }
.field input { flex: 1; width: 0; min-width: 0; outline: 0; }
.field input::placeholder { color: #5b6b80; opacity: 1; }
.field label { position: absolute; left: 7px; top: -5px; padding: 0 4px; background: linear-gradient(transparent 4px, #fff 4px 6px, transparent 6px); font-size: 9px; line-height: 10px; color: #5b6b80; white-space: nowrap; }
.f-e { width: 120px; } .f-v { width: 70px; } .f-t { width: 130px; } .f-a { width: 150px; }
.second { margin-top: 4px; }
.density { font-size: 11px; line-height: 15px; color: #7c7f85; }
.thick { height: 2px; margin-top: 8px; background: #cdd5e0; }
.thin { height: 1px; margin-top: 8px; background: #cdd5e0; }
.soft { height: 2px; margin-top: 7px; background: #e0e3ea; }
.axis { display: flex; align-items: center; gap: 6px; height: 23px; }
.pick { position: relative; display: flex; align-items: center; height: 23px; border-bottom: 2px solid #dcdcdc; }
.pick select { appearance: none; width: 100%; height: 100%; outline: 0; }
.pick svg { position: absolute; right: 1px; width: 22px; height: 22px; color: #5a5a5a; pointer-events: none; }
.axis .pick { width: 40px; }
.node { display: grid; grid-template-columns: 171px 1fr 32px; align-items: end; height: 28px; margin-bottom: 4px; }
.node label { line-height: 24px; }
.node .pick { font-weight: 500; }
.node button { height: 28px; color: #475569; }
.row { display: flex; gap: 7px; }
.btn { height: 20px; padding: 0 12px; border: 1px solid #cdd5e0; border-radius: 2px; }
.btn.primary { border-color: #007bff; background: #007bff; color: #fff; font-weight: 700; gap: 6px; }
.btn.primary svg { width: 18px; height: 18px; }
.calc { margin-top: 6px; }
.results { display: flex; flex-wrap: wrap; column-gap: 4px; margin-top: 7px; font-size: 11px; }
.results button { height: 30px; padding: 0 14px; border: 1px solid #cdd5e0; border-radius: 2px; }
.results .on { background: #dce0f9; padding-left: 10px; gap: 11px; }
.results .on svg { width: 12px; height: 12px; }
.legend { height: 14px; margin-top: 4px; border: 1px solid rgba(0, 0, 0, .25); background: linear-gradient(90deg, #2150db, #00b0dc 25%, #26b33b 50%, #f2cc15 75%, #dc2821) border-box; }
.range { display: flex; justify-content: space-between; font-size: 11px; line-height: 16px; }
.deform { display: flex; align-items: center; margin-top: 13px; height: 22px; font-size: 11px; }
.deform label { width: 142px; white-space: nowrap; }
.deform button { margin-left: auto; padding-right: 12px; color: #007bff; font-size: 12px; }
.deform input { appearance: none; width: 206px; height: 20px; margin: 0; background: linear-gradient(#e0e3ea, #e0e3ea) center / 100% 4px no-repeat; }
.deform input::-webkit-slider-thumb { appearance: none; width: 20px; height: 20px; border-radius: 50%; background: #007bff; }

.status { display: flex; align-items: center; height: 24px; flex: none; border-top: 1px solid #cdd5e0; background: #e4e9f2; color: #334155; font-size: 11px; }
.ready { flex: 1; padding-left: 10px; }
.cell { display: flex; align-items: center; gap: 4px; padding: 0 7px; line-height: 14px; border-right: 1px solid #cdd5e0; }
.cell i { font-style: normal; padding-right: 4px; }
.cell i:last-child { padding: 0; }
.cell svg { width: 12px; height: 14px; }
.dimmed { gap: 2px; }
.dimmed svg { color: #7d8794; }
.cpu { width: 103px; justify-content: flex-end; border: 0; }
.mem { width: 144px; justify-content: flex-end; }
</style>
